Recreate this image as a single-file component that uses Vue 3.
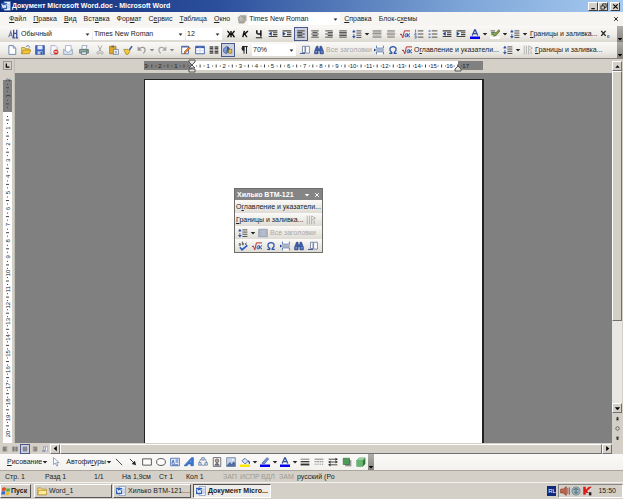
<script setup>
import { h } from 'vue'

const Icon = (props) =>
  h('svg', { class: 'icon', viewBox: '0 0 16 16', 'aria-hidden': 'true' }, [h('use', { href: '#i-' + props.name })])
Icon.props = ['name']

const menus = [
  ['', 'Ф', 'айл'], ['', 'П', 'равка'], ['', 'В', 'ид'], ['Вст', 'а', 'вка'],
  ['Фор', 'м', 'ат'], ['С', 'е', 'рвис'], ['', 'Т', 'аблица'], ['', 'О', 'кно'],
]

const formatting = [
  { i: 'bold', t: 'Полужирный' }, { i: 'italic', t: 'Курсив' }, { i: 'under', t: 'Подчеркнутый' },
  { i: 'outdent', t: 'Уменьшить отступ' }, { i: 'indent', t: 'Увеличить отступ' },
  { i: 'left', t: 'По левому краю', on: true }, { i: 'center', t: 'По центру' },
  { i: 'right', t: 'По правому краю' }, { i: 'justify', t: 'По ширине' },
  { i: 'spacing', t: 'Интервал', d: true }, { i: 'cellA', t: 'Объединить', off: true },
  { i: 'cellB', t: 'Разбить', off: true }, { i: 'sqrt', t: 'Формула' },
  { i: 'numlist', t: 'Нумерация' }, { i: 'list', t: 'Маркеры' },
  { i: 'outdent', t: 'Отступ влево' }, { i: 'indent', t: 'Отступ вправо' },
  { i: 'fontcolor', t: 'Цвет шрифта', d: true }, { i: 'marker', t: 'Выделение цветом', d: true },
  { i: 'spacing', t: 'Интервал строк', d: true },
]

const standard = [
  { i: 'new', t: 'Создать' }, { i: 'open', t: 'Открыть' }, { i: 'save', t: 'Сохранить' },
  { i: 'perm', t: 'Разрешения' }, { i: 'mail', t: 'Сообщение' }, { sep: true },
  { i: 'print', t: 'Печать' }, { sep: true }, { i: 'cut', t: 'Вырезать', off: true },
  { i: 'paste', t: 'Вставить' }, { i: 'brush', t: 'Формат по образцу' },
  { i: 'undo', t: 'Отменить', off: true, d: true }, { i: 'redo', t: 'Вернуть', off: true, d: true },
  { sep: true }, { sep: true }, { i: 'borders', t: 'Таблицы и границы' }, { i: 'table', t: 'Таблица' },
  { i: 'columns', t: 'Колонки' }, { i: 'draw', t: 'Рисование', on: true }, { sep: true },
  { i: 'para', t: 'Непечатаемые знаки' },
]

const shapes = [
  { i: 'line', t: 'Линия' }, { i: 'arrow', t: 'Стрелка' }, { i: 'rect', t: 'Прямоугольник' },
  { i: 'oval', t: 'Овал' }, { i: 'textbox', t: 'Надпись' }, { i: 'wordart', t: 'WordArt' },
  { i: 'diagram', t: 'Диаграмма' }, { i: 'clip', t: 'Картинка' }, { i: 'picture', t: 'Рисунок' },
  { i: 'fill', t: 'Цвет заливки', d: true }, { i: 'pen', t: 'Цвет линий', d: true },
  { i: 'fontcolor', t: 'Цвет шрифта', d: true }, { i: 'weight', t: 'Тип линии' },
  { i: 'dash', t: 'Тип штриха' }, { i: 'arrows', t: 'Вид стрелки' },
  { i: 'shadow', t: 'Тень' }, { i: 'cube', t: 'Объем' },
]

const STEP = 16.1
const hMarks = Array.from({ length: 20 }, (_, k) => k - 2)
const vMarks = Array.from({ length: 23 }, (_, k) => k - 2)
const label = (n) => (n === 0 ? '' : String(Math.abs(n)))
</script>

<template>
  <svg class="sprite" aria-hidden="true">
    <symbol id="i-bold" viewBox="0 0 16 16"><path d="M8 3v10M2 3.500c3 0 2 4 5 4.500M2 12.500c3 0 2-4.500 5-4.500M14 3.500c-3 0-2 4-5 4.500M14 12.500c-3 0-2-4.500-5-4.500" fill="none" stroke="#111" stroke-width="2.400" /></symbol>
    <symbol id="i-italic" viewBox="0 0 16 16"><path d="M7 3 4.500 13M13 3.500c-3 0-3 4-6.500 4.500 3 0 2.500 4.500 5 4.500" fill="none" stroke="#111" stroke-width="2.400" /></symbol>
    <symbol id="i-under" viewBox="0 0 16 16"><path d="M4.500 2v4q0 2 3 2h3M11 2v10" fill="none" stroke="#111" stroke-width="2.400" /><path d="M3 14h10" stroke="#111" stroke-width="1.500" /></symbol>
    <symbol id="i-outdent" viewBox="0 0 16 16"><path d="M1 3h14M8 6h7M8 9h7M1 12h14" stroke="#444" stroke-width="1.700" /><path d="M6 4v7L1 7.500z" fill="#23408e" /></symbol>
    <symbol id="i-indent" viewBox="0 0 16 16"><path d="M1 3h14M8 6h7M8 9h7M1 12h14" stroke="#444" stroke-width="1.700" /><path d="M1 4v7l5-3.500z" fill="#23408e" /></symbol>
    <symbol id="i-left" viewBox="0 0 16 16"><path d="M2 3h12M2 5.500h8M2 8h12M2 10.500h8M2 13h12" stroke="#333" stroke-width="1.500" /></symbol>
    <symbol id="i-center" viewBox="0 0 16 16"><path d="M2 3h12M4 5.500h8M2 8h12M4 10.500h8M2 13h12" stroke="#444" stroke-width="1.500" /></symbol>
    <symbol id="i-right" viewBox="0 0 16 16"><path d="M2 3h12M6 5.500h8M2 8h12M6 10.500h8M2 13h12" stroke="#444" stroke-width="1.500" /></symbol>
    <symbol id="i-justify" viewBox="0 0 16 16"><path d="M2 3h12M2 5.500h12M2 8h12M2 10.500h12M2 13h12" stroke="#444" stroke-width="1.500" /></symbol>
    <symbol id="i-spacing" viewBox="0 0 16 16"><path d="M7 3h8M7 6.500h8M7 10h8M7 13.500h8" stroke="#444" stroke-width="1.500" /><path d="M3 3v10" stroke="#2f55a8" stroke-width="1.500" stroke-dasharray="3 2" /><path d="M0 5l3-4 3 4zM0 11l3 4 3-4z" fill="#2f55a8" /></symbol>
    <symbol id="i-cellA" viewBox="0 0 16 16"><path d="M1 2h14v12H1z" fill="#c4c2bc" /><path d="M1 3h14M1 7h14M1 13h14" stroke="#8b8a86" stroke-width="1.500" /></symbol>
    <symbol id="i-cellB" viewBox="0 0 16 16"><path d="M2 2h12v12H2z" fill="#c8c6c0" /><path d="M2 3h12M1 8h14M2 13h12" stroke="#8b8a86" stroke-width="1.500" /></symbol>
    <symbol id="i-sqrt" viewBox="0 0 16 16"><path d="M0 9l2-1 2.500 6L7 3h9" fill="none" stroke="#b3262b" stroke-width="1.500" /><path d="M11 7.500c-3-1.500-4 5-1.500 5.500 2 0 2-5 2.500-5.500-.5 3 0 5 1 5.500M16 7.500c-3-.5-3 5.500 0 5" fill="none" stroke="#2552b8" stroke-width="1.600" /></symbol>
    <symbol id="i-numlist" viewBox="0 0 16 16"><path d="M6 3h9M6 8h9M6 13h9" stroke="#444" stroke-width="1.500" /><path d="M2.500 1v4M1 6.500h2.500L1 9.500h3M1 11.500h2.500v3H1" fill="none" stroke="#2f55a8" stroke-width="1.200" /></symbol>
    <symbol id="i-list" viewBox="0 0 16 16"><path d="M6 3h9M6 8h9M6 13h9" stroke="#444" stroke-width="1.500" /><path d="M1 2h3v2.500H1zM1 7h3v2.500H1zM1 12h3v2.500H1z" fill="#5c79b8" /></symbol>
    <symbol id="i-fontcolor" viewBox="0 0 16 16"><path d="M3.500 10.500 7.500 1.500h1l4 9M5 7.500h6" fill="none" stroke="#2a4a9c" stroke-width="2" /><path d="M0 12h16v4H0z" fill="#0000f0" /></symbol>
    <symbol id="i-marker" viewBox="0 0 16 16"><path d="M1 3h7M2 5.500h7" stroke="#555" stroke-width="1.500" /><path d="M14 1 7 9l-2 3 4-1 7-8z" fill="#8ba03c" stroke="#45591c" /><path d="M2 6h5v4H2z" fill="#62a23c" /><path d="M0 12h16v4H0z" fill="#fff" /></symbol>
    <symbol id="i-new" viewBox="0 0 16 16"><path d="M3 1h7l4 4v10H3z" fill="#fff" stroke="#5272a8" stroke-width="1.300" /><path d="M10 1v4h4" fill="#c6d6f0" stroke="#5272a8" /></symbol>
    <symbol id="i-open" viewBox="0 0 16 16"><path d="M1 14V4h5l1 2h6v3" fill="#f6d56a" stroke="#9a7616" /><path d="M1 14l3-6h12l-3 6z" fill="#f5c533" stroke="#9a7616" /><path d="M8 3c2-3 5-2 6 1" fill="none" stroke="#3b62ad" stroke-width="1.400" /></symbol>
    <symbol id="i-save" viewBox="0 0 16 16"><path d="M1 1h14v14H1z" fill="#3d66c4" stroke="#203d85" /><path d="M4 1h8v6H4z" fill="#e4ecf9" /><path d="M4 10h8v5H4z" fill="#b7c7e8" /><path d="M9 11h2v4H9z" fill="#203d85" /></symbol>
    <symbol id="i-perm" viewBox="0 0 16 16"><path d="M3 1h7l3 3v11H3z" fill="#f6f8fc" stroke="#8894b0" /><circle cx="11" cy="11" r="4" fill="#cf3a2d" /><path d="M8.500 11h5" stroke="#fff" stroke-width="1.600" /></symbol>
    <symbol id="i-mail" viewBox="0 0 16 16"><path d="M4 1h9v11H4z" fill="#fff" stroke="#7d93b8" /><path d="M1 7l7 5 7-5v8H1z" fill="#d9e3f2" stroke="#7388ad" /></symbol>
    <symbol id="i-print" viewBox="0 0 16 16"><path d="M5 7V1h8L11 7z" fill="#fff" stroke="#6d86ad" /><path d="M1 7h14v6H1z" fill="#94a9a8" stroke="#42535e" /><path d="M4 11h8v4H4z" fill="#e4edf0" stroke="#42535e" /><path d="M11 8h3v2h-3z" fill="#3e9e4d" /></symbol>
    <symbol id="i-cut" viewBox="0 0 16 16"><path d="M5 1l4.500 9M11 1 6.500 10" stroke="#aaa" stroke-width="1.600" /><circle cx="5" cy="12.500" r="2" fill="none" stroke="#aaa" stroke-width="1.500" /><circle cx="11" cy="12.500" r="2" fill="none" stroke="#aaa" stroke-width="1.500" /></symbol>
    <symbol id="i-paste" viewBox="0 0 16 16"><path d="M1 2h10v12H1z" fill="#e3aa2b" stroke="#84601a" /><path d="M4 1h4v3H4z" fill="#6b6b6b" /><path d="M7 7h8v8H7z" fill="#fff" stroke="#40588b" /><path d="M9 10h4M9 12.500h4" stroke="#40588b" /></symbol>
    <symbol id="i-brush" viewBox="0 0 16 16"><path d="M9 7l4.500-6 2 1.500L11 9z" fill="#3f62ac" /><path d="M1 7h7l3 3-3 5H5z" fill="#f0cc3d" stroke="#91731c" /></symbol>
    <symbol id="i-undo" viewBox="0 0 16 16"><path d="M3 7c3-5 10-4 10 1 0 2-1 4-3 5" fill="none" stroke="#999" stroke-width="2" /><path d="M1 2v7h7z" fill="#999" /></symbol>
    <symbol id="i-redo" viewBox="0 0 16 16"><path d="M13 7C10 2 3 3 3 8c0 2 1 4 3 5" fill="none" stroke="#aaa" stroke-width="2" /><path d="M15 2v7H8z" fill="#aaa" /></symbol>
    <symbol id="i-borders" viewBox="0 0 16 16"><path d="M1 2h11v12H1z" fill="#fff" stroke="#4a64a0" stroke-width="1.400" /><path d="M1 3h11" stroke="#4a64a0" stroke-width="2" /><path d="M5 14l1-4 7-7 2 2-7 7z" fill="#e48e3c" stroke="#914712" /></symbol>
    <symbol id="i-table" viewBox="0 0 16 16"><path d="M1 2h14v12H1z" fill="#fff" stroke="#3a5fa8" stroke-width="1.500" /><path d="M1 3.500h14" stroke="#3a5fa8" stroke-width="3" /><path d="M1 9h14M8 3v11" stroke="#b9c9e6" /></symbol>
    <symbol id="i-columns" viewBox="0 0 16 16"><path d="M1 3h6M1 5.500h6M1 8h6M1 10.500h6M1 13h6M9 3h6M9 5.500h6M9 8h6M9 10.500h6M9 13h6" stroke="#4c4c4c" stroke-width="1.900" /></symbol>
    <symbol id="i-draw" viewBox="0 0 16 16"><path d="M1 6l5-4 4 3v5l-5 4-4-3z" fill="#7d9fd9" stroke="#29478c" /><path d="M6 12 8 3l2 9" fill="none" stroke="#29478c" stroke-width="1.600" /><path d="M9 7h5v6H9z" fill="#e9c94c" stroke="#7b6215" /></symbol>
    <symbol id="i-para" viewBox="0 0 16 16"><path d="M8 2v12M12 2v12M5 2.500h9" fill="none" stroke="#222" stroke-width="1.600" /><path d="M8 2a3.500 3.500 0 0 0 0 7z" fill="#222" stroke="#222" /></symbol>
    <symbol id="i-book" viewBox="0 0 16 16"><path d="M4 2h4v10H4zM9 2h6v11H9z" fill="#fff" stroke="#66759a" stroke-width="1.300" /><path d="M0 13.500h8" fill="none" stroke="#23408e" stroke-width="1.400" /></symbol>
    <symbol id="i-find" viewBox="0 0 16 16"><path d="M4 2h2.500v4h3V2H12l3 8v4h-5.500V9h-3v5H1v-4z" fill="#3a5fae" stroke="#203b7a" /><path d="M2.500 11h2M11.500 11h2" stroke="#c7d6f2" stroke-width="1.500" /></symbol>
    <symbol id="i-break" viewBox="0 0 16 16"><path d="M4 1v4h11V1M4 15v-4h11v4" fill="#fff" stroke="#5272a8" stroke-width="1.400" /><path d="M3 8h13" stroke="#4668a5" stroke-width="1.300" /><path d="M0 5.500v5L3.500 8z" fill="#23408e" /></symbol>
    <symbol id="i-omega" viewBox="0 0 16 16"><path d="M2 13.500h4v-1.500C1 8 2.500 2.500 8 2.500S15 8 10 12v1.500h4" fill="none" stroke="#2a52a8" stroke-width="2" /></symbol>
    <symbol id="i-textdir" viewBox="0 0 16 16"><path d="M2 1v14M5.500 1v14M9 1v14" stroke="#a3a19b" stroke-width="1.200" /><path d="M10 2l5 3-5 3M13 9v6" fill="none" stroke="#999" stroke-width="1.200" /></symbol>
    <symbol id="i-abc" viewBox="0 0 16 16"><path d="M1 5c3-3 3 0 3 1-3-1-3 2 0 1M7 1v5c3 1 3-3 0-3M14 3c-3 0-3 4 0 3" fill="none" stroke="#333" stroke-width="1.200" /><path d="M3 10l3.500 4L15 7" fill="none" stroke="#2f5cc0" stroke-width="2.600" /></symbol>
    <symbol id="i-outline" viewBox="0 0 16 16"><path d="M1 2h14v12H1z" fill="#a9b4c6" stroke="#8a94a6" /><path d="M4 5h8M4 8h8M4 11h8" stroke="#c9d0dc" /></symbol>
    <symbol id="i-sub" viewBox="0 0 16 16"><path d="M2 3l7 8M9 3l-7 8" stroke="#222" stroke-width="2.200" /><path d="M12 10.500h2.500v3H12z" fill="none" stroke="#5272a8" stroke-width="1.300" /></symbol>
    <symbol id="i-style" viewBox="0 0 16 16"><path d="M1 13 4.500 4 7 13M2 10h4" fill="none" stroke="#6a79ad" stroke-width="1.700" /><path d="M9 1v13M14 1v13M9 7h5M7 14h4M12 14h4" fill="none" stroke="#3a4c9a" stroke-width="2" /></symbol>
    <symbol id="i-cursor" viewBox="0 0 16 16"><path d="M4 1v11l3-2.500 2 5 2-1-2-4.500h4z" fill="#fff" stroke="#7388ad" stroke-width="1.200" /></symbol>
    <symbol id="i-line" viewBox="0 0 16 16"><path d="M3 3l10 10" stroke="#333" stroke-width="1.400" /></symbol>
    <symbol id="i-arrow" viewBox="0 0 16 16"><path d="M3 3l8 8" stroke="#333" stroke-width="1.500" /><path d="M13 13 6 11l5-5z" fill="#222" /></symbol>
    <symbol id="i-rect" viewBox="0 0 16 16"><path d="M1 3h14v10H1z" fill="#fdfdfc" stroke="#444" stroke-width="1.400" /></symbol>
    <symbol id="i-oval" viewBox="0 0 16 16"><ellipse cx="8" cy="8" rx="7" ry="5.500" fill="#fdfdfc" stroke="#444" stroke-width="1.400" /></symbol>
    <symbol id="i-textbox" viewBox="0 0 16 16"><path d="M1 2h14v12H1z" fill="#dfe9f8" stroke="#4c70b5" stroke-width="1.400" /><path d="M3 11 5 5l2 6M9 5h4M9 8h4M3 12.500h10" fill="none" stroke="#3157a5" stroke-width="1.300" /></symbol>
    <symbol id="i-wordart" viewBox="0 0 16 16"><path d="M0 14 12 1h3v13h-4v-3H7l-2 3z" fill="#3f78d6" stroke="#2453a6" /><path d="M10 8h1V6z" fill="#fff" /></symbol>
    <symbol id="i-diagram" viewBox="0 0 16 16"><circle cx="8" cy="8" r="5.500" fill="none" stroke="#6b7c9b" stroke-width="1.300" /><path d="M6 1h4v4H6zM1 9h4v4H1zM11 9h4v4h-4z" fill="#d6e2f5" stroke="#4c6798" /></symbol>
    <symbol id="i-clip" viewBox="0 0 16 16"><path d="M2 1h12v14H2z" fill="#fff" stroke="#58606e" stroke-width="1.400" /><circle cx="8" cy="6" r="3" fill="#b9a08a" stroke="#4a3f38" /><path d="M4 14c0-6 8-6 8 0z" fill="#6b6b75" /></symbol>
    <symbol id="i-picture" viewBox="0 0 16 16"><path d="M1 1h14v14H1z" fill="#c2d2ea" stroke="#7485a5" stroke-width="1.300" /><path d="M1 14 6 8l3 3 3-4 3 3v5H1z" fill="#506d9d" /><circle cx="11" cy="4.500" r="1.600" fill="#fff" /></symbol>
    <symbol id="i-fill" viewBox="0 0 16 16"><path d="M3 6l5-4 5 5-5 4z" fill="#d7e1f2" stroke="#4b659b" stroke-width="1.300" /><path d="M13 6q3 2 1.500 5" fill="none" stroke="#3157a5" stroke-width="2" /><path d="M0 12h16v4H0z" fill="#fbe800" /></symbol>
    <symbol id="i-pen" viewBox="0 0 16 16"><path d="M3 10 11 1l3 2-7 8z" fill="#7896cf" stroke="#3c5995" /><path d="M0 12h16v4H0z" fill="#0000f0" /></symbol>
    <symbol id="i-weight" viewBox="0 0 16 16"><path d="M1 3.500h14" stroke="#333" /><path d="M1 7.500h14" stroke="#333" stroke-width="2" /><path d="M1 12h14" stroke="#333" stroke-width="3" /></symbol>
    <symbol id="i-dash" viewBox="0 0 16 16"><path d="M1 3.500h14" stroke="#777" stroke-width="1.500" /><path d="M1 7.500h14" stroke="#777" stroke-width="1.500" stroke-dasharray="3 1" /><path d="M1 11.500h14" stroke="#777" stroke-width="1.500" stroke-dasharray="1.500 1.500" /></symbol>
    <symbol id="i-arrows" viewBox="0 0 16 16"><path d="M1 3.500h12M3 8h10M3 12.500h12" stroke="#333" stroke-width="1.400" /><path d="M16 3.500 12 1v5zM16 8l-4-2.500v5zM0 8l4-2.500v5zM0 12.500l4-2.500v5z" fill="#333" /></symbol>
    <symbol id="i-shadow" viewBox="0 0 16 16"><path d="M5 5h10v10H5z" fill="#999" /><path d="M2 2h10v10H2z" fill="#4c9b58" stroke="#2b6c37" /></symbol>
    <symbol id="i-cube" viewBox="0 0 16 16"><path d="M1 5l4-4h10v10l-4 4H1z" fill="#2e7a3c" /><path d="M1 5h10v10H1z" fill="#67b372" /><path d="M1 5l4-4h10l-4 4z" fill="#95d09c" /></symbol>
    <symbol id="i-word" viewBox="0 0 16 16"><path d="M5 1h10v14H5z" fill="#fff" stroke="#5a7fc4" /><path d="M11 5h3M11 8h3M11 11h3" stroke="#5a7fc4" /><path d="M0 3h10v10H0z" fill="#2f62b8" /><path d="M1.500 5 3.500 11 5 6.500 6.500 11 8.500 5" fill="none" stroke="#fff" stroke-width="1.500" /></symbol>
    <symbol id="i-folder" viewBox="0 0 16 16"><path d="M1 14V3h5l2 2h7v9z" fill="#f8dc78" stroke="#a9852a" /><path d="M1 14l2-7h13l-1 7z" fill="#ffe99a" stroke="#a9852a" /></symbol>
    <symbol id="i-flag" viewBox="0 0 16 16"><path d="M2 3q3-2 6 0L7 8Q4 6 1 8z" fill="#e3482a" /><path d="M9 3q3 2 6 0l-1 5q-3 2-6 0z" fill="#5fae3a" /><path d="M1 9q3-2 6 0l-1 5q-3-2-6 0z" fill="#3c6bd4" /><path d="M8 9q3 2 6 0l-1 5q-3 2-6 0z" fill="#f2bd27" /></symbol>
    <symbol id="i-hand" viewBox="0 0 16 16"><path d="M1 6l4-4h10v8l-4 5H3z" fill="#a5a29c" /><path d="M2 7h8M6 3v7M4 10h8" stroke="#d6d4ce" /></symbol>
    <symbol id="i-x" viewBox="0 0 16 16"><path d="M3 3l10 10M13 3 3 13" stroke="currentColor" stroke-width="2.600" /></symbol>
    <symbol id="i-min" viewBox="0 0 16 16"><path d="M3 13h8" stroke="#000" stroke-width="2.600" /></symbol>
    <symbol id="i-max" viewBox="0 0 16 16"><path d="M6 6V2h8v8h-4M2 6.500h8V14H2z" fill="none" stroke="#000" stroke-width="1.700" /></symbol>
    <symbol id="i-up" viewBox="0 0 16 16"><path d="M3 11l5-6 5 6z" fill="#000" /></symbol>
    <symbol id="i-down" viewBox="0 0 16 16"><path d="M2 5h12l-6 7z" fill="currentColor" /></symbol>
    <symbol id="i-prev" viewBox="0 0 16 16"><path d="M11 2v12L4 8z" fill="#000" /></symbol>
    <symbol id="i-next" viewBox="0 0 16 16"><path d="M5 2v12l7-6z" fill="#000" /></symbol>
    <symbol id="i-dot" viewBox="0 0 16 16"><circle cx="8" cy="8" r="4" fill="none" stroke="#555" stroke-width="1.800" /></symbol>
    <symbol id="i-pgup" viewBox="0 0 16 16"><path d="M4 8l4-4 4 4zM4 12l4-4 4 4z" fill="#222" /></symbol>
    <symbol id="i-pgdn" viewBox="0 0 16 16"><path d="M4 4l4 4 4-4zM4 8l4 4 4-4z" fill="#222" /></symbol>
    <symbol id="i-sound" viewBox="0 0 16 16"><path d="M1 5h4l5-4v14l-5-4H1z" fill="#c8644a" stroke="#7e2e1d" /><path d="M12.500 3v10M15 2v12" stroke="#9b3e2d" stroke-width="1.300" /></symbol>
    <symbol id="i-globe" viewBox="0 0 16 16"><circle cx="8" cy="8" r="6.500" fill="#9db3bd" stroke="#58707c" /><path d="M4 6q4-4 8 0M5 10q3 3 6 0M8 5v6" fill="none" stroke="#466" stroke-width="1.500" /></symbol>
    <symbol id="i-kav" viewBox="0 0 16 16"><path d="M2 1h4v5l5-5h5L8 8l3 3H7L6 9v5H2z" fill="#dd1717" /><path d="M11 10h4v5h-4z" fill="#222" /></symbol>
  </svg>

  <div class="window">
    <header class="title">
      <Icon name="word" />
      <h1>Документ Microsoft Word.doc - Microsoft Word</h1>
      <div class="winbtns">
        <button aria-label="Свернуть"><Icon name="min" /></button>
        <button aria-label="Восстановить"><Icon name="max" /></button>
        <button class="close" aria-label="Закрыть"><Icon name="x" /></button>
      </div>
    </header>

    <nav class="menu" aria-label="Меню">
      <button v-for="m in menus" :key="m[1] + m[2]">{{ m[0] }}<u>{{ m[1] }}</u>{{ m[2] }}</button>
      <Icon name="hand" />
      <label class="combo helpfont"><select aria-label="Шрифт справки"><option>Times New Roman</option></select><Icon name="down" /></label>
      <button><u>С</u>правка</button>
      <button>Блок-с<u>х</u>емы</button>
      <button class="closedoc" aria-label="Закрыть документ"><Icon name="x" /></button>
    </nav>

    <div class="bar fmt" role="toolbar" aria-label="Форматирование">
      <button class="tb" aria-label="Стили"><Icon name="style" /></button>
      <label class="combo style"><select aria-label="Стиль"><option>Обычный</option></select><Icon name="down" /></label>
      <label class="combo font"><select aria-label="Шрифт"><option>Times New Roman</option></select><Icon name="down" /></label>
      <label class="combo size"><select aria-label="Размер"><option>12</option></select><Icon name="down" /></label>
      <template v-for="(b, k) in formatting" :key="k">
        <button class="tb" :class="{ on: b.on }" :aria-label="b.t"><Icon :name="b.i" /></button>
        <span v-if="b.d" class="drop"><Icon name="down" /></span>
      </template>
      <button class="txt"><u>Г</u>раницы и заливка...</button>
      <button class="tb sub" aria-label="Подстрочный"><Icon name="sub" /></button>
      <span class="end"><Icon name="down" /></span>
    </div>

    <div class="bar std" role="toolbar" aria-label="Стандартная">
      <template v-for="(b, k) in standard" :key="k">
        <span v-if="b.sep" class="sep"></span>
        <button v-else class="tb" :class="{ on: b.on }" :aria-label="b.t"><Icon :name="b.i" /></button>
        <span v-if="b.d" class="drop" :class="{ off: b.off }"><Icon name="down" /></span>
      </template>
      <label class="combo zoom"><select aria-label="Масштаб"><option>70%</option></select><Icon name="down" /></label>
      <button class="tb" aria-label="Чтение"><Icon name="book" /></button>
      <button class="tb" aria-label="Найти"><Icon name="find" /></button>
      <button class="txt heads" disabled>Все заголовки</button>
      <button class="tb" aria-label="Разрыв"><Icon name="break" /></button>
      <button class="tb" aria-label="Символ"><Icon name="omega" /></button>
      <button class="tb" aria-label="Формула"><Icon name="sqrt" /></button>
      <button class="txt toc">О<u>г</u>лавление и указатели...</button>
      <button class="tb" aria-label="Интервал"><Icon name="spacing" /></button>
      <span class="drop"><Icon name="down" /></span>
      <button class="tb" aria-label="Направление текста"><Icon name="textdir" /></button>
      <button class="txt"><u>Г</u>раницы и заливка...</button>
      <span class="end"><Icon name="down" /></span>
    </div>

    <main class="work">
      <div class="left">
        <button class="tab" aria-label="Табуляция"><svg viewBox="0 0 9 9" aria-hidden="true"><path d="M3 2v4.500h4" fill="none" stroke="#000" stroke-width="1.600" /></svg></button>
        <svg class="vruler" width="9" height="371" aria-hidden="true">
          <rect y="7" width="9" height="364" fill="#fff" />
          <rect y="7" width="9" height="32" fill="#808080" />
          <g v-for="n in vMarks" :key="n" :transform="`translate(5 ${39 + n * STEP})`">
            <text transform="rotate(-90)" y="2">{{ label(n) }}</text>
            <path v-if="n < 20" d="M-2 8h3M-1 4.500h1M-1 11.500h1" />
          </g>
        </svg>
      </div>
      <div class="center">
        <svg class="hruler" width="339" height="14" aria-hidden="true">
          <rect y="2" width="339" height="9" fill="#808080" />
          <rect x="48" y="2" width="266" height="9" fill="#fff" />
          <text x="2" y="9">3</text>
          <g v-for="n in hMarks" :key="n" :transform="`translate(${48 + n * STEP} 7)`">
            <text y="2">{{ label(n) }}</text>
            <path d="M-8-1.500v3M-4-.5v1M-11.500-.5v1" />
          </g>
          <path class="stop" d="M45 1h6v2l-3 3-3-3zM48 6l3 3H45zM45 10h6v3H45z" />
          <path class="stop" d="M314 7l3 3v2h-6v-2z" />
        </svg>
        <div class="canvas"><article class="page" aria-label="Страница документа"></article></div>
      </div>
      <div class="vscroll">
        <button aria-label="Вверх"><Icon name="up" /></button>
        <div class="vthumb"></div>
        <div class="vtrack"></div>
        <button aria-label="Вниз"><Icon name="down" /></button>
        <button class="flat" aria-label="Предыдущая страница"><Icon name="pgup" /></button>
        <button class="flat" aria-label="Объект перехода"><Icon name="dot" /></button>
        <button class="flat" aria-label="Следующая страница"><Icon name="pgdn" /></button>
      </div>

      <section class="float" aria-label="Хилько BTM-121">
        <h2><span>Хилько BTM-121</span><Icon name="down" /><Icon name="x" /></h2>
        <div><button class="txt">О<u>г</u>лавление и указатели...</button></div>
        <div><button class="txt"><u>Г</u>раницы и заливка...</button><button class="tb" aria-label="Направление"><Icon name="textdir" /></button></div>
        <div>
          <button class="tb" aria-label="Интервал"><Icon name="spacing" /></button><span class="drop"><Icon name="down" /></span>
          <button class="tb" aria-label="Структура"><Icon name="outline" /></button>
          <button class="txt" disabled>Все заголовки</button>
        </div>
        <div>
          <button v-for="n in ['abc', 'sqrt', 'omega', 'break', 'find', 'book']" :key="n" class="tb" :aria-label="n"><Icon :name="n" /></button>
        </div>
      </section>
    </main>

    <div class="hscroll">
      <button class="view" aria-label="Обычный режим"><Icon name="left" /></button>
      <button class="view" aria-label="Веб-документ"><Icon name="columns" /></button>
      <button class="view on" aria-label="Разметка"><Icon name="justify" /></button>
      <button class="view" aria-label="Структура"><Icon name="right" /></button>
      <button class="view" aria-label="Чтение"><Icon name="book" /></button>
      <button class="arr" aria-label="Влево"><Icon name="prev" /></button>
      <div class="hthumb"></div>
      <button class="arr" aria-label="Вправо"><Icon name="next" /></button>
    </div>

    <div class="bar drawbar" role="toolbar" aria-label="Рисование">
      <button class="txt"><u>Р</u>исование</button><span class="drop"><Icon name="down" /></span>
      <button class="tb pick" aria-label="Выбор объектов"><Icon name="cursor" /></button>
      <button class="txt">Автофи<u>г</u>уры</button><span class="drop"><Icon name="down" /></span>
      <template v-for="(b, k) in shapes" :key="k">
        <button class="tb" :aria-label="b.t"><Icon :name="b.i" /></button>
        <span v-if="b.d" class="drop"><Icon name="down" /></span>
      </template>
      <span class="end inline"><Icon name="down" /></span>
    </div>

    <footer class="status">
      <span>Стр. 1</span><span>Разд 1</span><span>1/1</span><span>На 1,9см</span><span>Ст 1</span><span>Кол 1</span>
      <span class="dim">ЗАП</span><span class="dim">ИСПР</span><span class="dim">ВДЛ</span><span class="dim">ЗАМ</span><span>русский (Ро</span>
    </footer>

    <nav class="tasks" aria-label="Панель задач">
      <button class="start"><Icon name="flag" />Пуск</button>
      <button class="task"><Icon name="folder" />Word_1</button>
      <button class="task"><Icon name="word" />Хилько BTM-121....</button>
      <button class="task active"><Icon name="word" />Документ Micro...</button>
      <span class="lang">RL</span>
      <div class="tray"><Icon name="sound" /><Icon name="globe" /><Icon name="kav" /><time>15:50</time></div>
    </nav>
  </div>
</template>

<style>
body { margin: 0; overflow: hidden; }
</style>

<style scoped>
.sprite { position: absolute; width: 0; height: 0; }
.window { display: flex; flex-direction: column; height: 100vh; background: #d4d0c8; color: #222; font: 7px/10px "Liberation Sans", Arial, sans-serif; white-space: nowrap; }
.window * { box-sizing: border-box; }
button, select { font: inherit; color: inherit; border: 0; padding: 0; margin: 0; background: none; }
.icon { width: 10px; height: 10px; flex: none; display: block; }
u { text-underline-offset: 1px; text-decoration-thickness: 1px; }

.title { flex: none; display: flex; align-items: center; height: 12px; padding: 0 3px 0 1px; gap: 1px; color: #fff; background: linear-gradient(90deg, #0f2c78, #2c4f9c 35%, #7fa6d8 75%, #a6caf0); }
.title h1 { flex: 1; margin: 0; font-size: 7px; font-weight: 700; }
.winbtns { display: flex; }
.winbtns button { width: 10px; height: 9px; display: grid; place-items: center; background: #d4d0c8; border: 1px solid; border-color: #fff #404040 #404040 #fff; color: #000; }
.winbtns .close { margin-left: 2px; }
.winbtns .icon { width: 7px; height: 7px; }

.menu { flex: none; display: flex; align-items: center; gap: 7px; height: 14px; padding: 0 4px 0 9px; background: #f6f5f2; }
.menu .closedoc { margin-left: auto; }
.menu .closedoc .icon { width: 6px; height: 6px; }
.menu .helpfont { width: 92px; margin: 0 -3px 0 -6px; }

.combo { flex: none; display: flex; align-items: center; height: 12px; padding: 0 2px 0 1px; background: #fff; }
.combo select { flex: 1; min-width: 0; appearance: none; height: 12px; }
.combo .icon { width: 5px; height: 5px; }

.bar { flex: none; display: flex; align-items: center; height: 16px; position: relative; background: linear-gradient(#faf9f7, #eeece7 60%, #dbd8d0); }
.tb { flex: none; width: 14px; height: 14px; display: grid; place-items: center; }
.tb.on { background: #cdd0de; border: 1px solid #4b5a8c; }
.drop { flex: none; width: 6px; display: grid; place-items: center; }
.drop .icon { width: 6px; height: 6px; }
.drop.off { color: #888; }
.sep { flex: none; width: 2px; }
.txt { flex: none; height: 12px; }
.txt:disabled { color: #aaa7a0; }
.end { position: absolute; right: 0; top: 0; bottom: 0; width: 6px; display: grid; align-items: end; background: linear-gradient(#b0aea8, #85837e); color: #000; }
.end .icon { width: 6px; height: 6px; }
.end.inline { position: static; height: 16px; }
.fmt { padding-left: 6px; }
.combo.style { width: 72px; }
.combo.font { width: 92px; margin-left: 1px; }
.combo.size { width: 36px; margin: 0 2px 0 1px; }
.fmt .txt { margin-left: 2px; width: 68px; text-align: left; }
.std { padding-left: 5px; border-bottom: 1px solid #8a8880; height: 17px; }
.combo.zoom { width: 44px; margin: 0 2px 0 1px; }
.heads { width: 46px; }
.toc { width: 87px; text-align: left; }

.work { flex: 1; min-height: 0; display: flex; position: relative; padding-right: 1px; }
.left { flex: none; width: 15px; padding-left: 3px; border-right: 1px solid #c0bdb5; overflow: hidden; }
.tab { display: block; width: 9px; height: 9px; margin: 2px 0 3px; border: 1px solid #9a978f; }
.tab svg { display: block; width: 7px; height: 7px; }
.vruler { display: block; }
.vruler text, .hruler text { font-size: 6px; text-anchor: middle; fill: #222; }
.vruler path, .hruler path { stroke: #444; stroke-width: 1; fill: none; }
.hruler .stop { fill: #e6e3db; stroke: #555; }
.center { flex: 1; min-width: 0; display: flex; flex-direction: column; }
.hruler { flex: none; display: block; margin: 0 auto; }
.canvas { flex: 1; min-height: 0; display: flex; justify-content: center; padding-top: 6px; background: #808080; }
.page { width: 340px; background: #fff; border: 1px solid #222; border-right-width: 2px; border-bottom: 0; }

.vscroll { flex: none; width: 10px; margin-top: 2px; display: flex; flex-direction: column; background: #e9e7e3; }
.vscroll button, .arr { flex: none; width: 10px; height: 10px; display: grid; place-items: center; background: #d4d0c8; border: 1px solid; border-color: #fff #707070 #707070 #fff; color: #000; }
.vscroll .flat { border-color: #d4d0c8; }
.vscroll .icon, .arr .icon { width: 7px; height: 7px; }
.vthumb { flex: 3; background: #d4d0c8; border: 1px solid; border-color: #fff #707070 #707070 #fff; }
.vtrack { flex: 1; }

.hscroll { flex: none; display: flex; align-items: center; height: 11px; padding-right: 11px; }
.view { width: 10px; height: 10px; display: grid; place-items: center; }
.view.on { border: 1px solid #4b5a8c; background: #cdd0de; }
.view .icon { width: 6px; height: 6px; }
.hthumb { flex: 1; height: 10px; border: 1px solid; border-color: #fff #707070 #707070 #fff; }

.drawbar { padding-left: 7px; background: linear-gradient(#fbfaf8, #f3f2ee); }
.drawbar .pick { margin: 0 3px 0 1px; }

.status { flex: none; display: grid; grid-template-columns: 40px 49px 28px 37px 27px 37px 17px 21px 18px 18px 1fr; align-items: center; height: 12px; padding-left: 5px; border-top: 1px solid #aaa79f; }
.dim { color: #9c9992; }

.tasks { flex: none; display: flex; align-items: center; gap: 1px; height: 17px; border-top: 1px solid #f5f3ef; }
.start, .task { display: flex; align-items: center; height: 14px; border: 1px solid; border-color: #fff #555 #555 #fff; }
.start { width: 31px; font-weight: 700; margin-right: 2px; }
.task { width: 78px; padding-left: 2px; gap: 2px; overflow: hidden; }
.task.active { margin-left: 1px; background: #efede9; border-color: #555 #fff #fff #555; font-weight: 700; }
.lang { margin-left: auto; width: 9px; height: 10px; background: #10297c; color: #fff; font-size: 6px; text-align: center; margin-right: 1px; }
.tray { display: flex; align-items: center; gap: 1px; height: 14px; padding: 0 6px 0 1px; border: 1px solid; border-color: #888 #fff #fff #888; }
.tray time { margin-left: 5px; }

.float { position: absolute; left: 234px; top: 129px; width: 89px; border: 1px solid #6f6d68; background: #f1efeb; }
.float h2 { display: flex; align-items: center; height: 11px; margin: 0; padding: 0 2px; gap: 4px; font-size: 7px; color: #fff; background: #858585; }
.float h2 span { flex: 1; }
.float h2 .icon { width: 6px; height: 6px; }
.float div { display: flex; align-items: center; height: 13px; padding: 0 1px; background: linear-gradient(#fbfaf8, #dfdcd5); }
.float .tb { height: 13px; }
</style>
